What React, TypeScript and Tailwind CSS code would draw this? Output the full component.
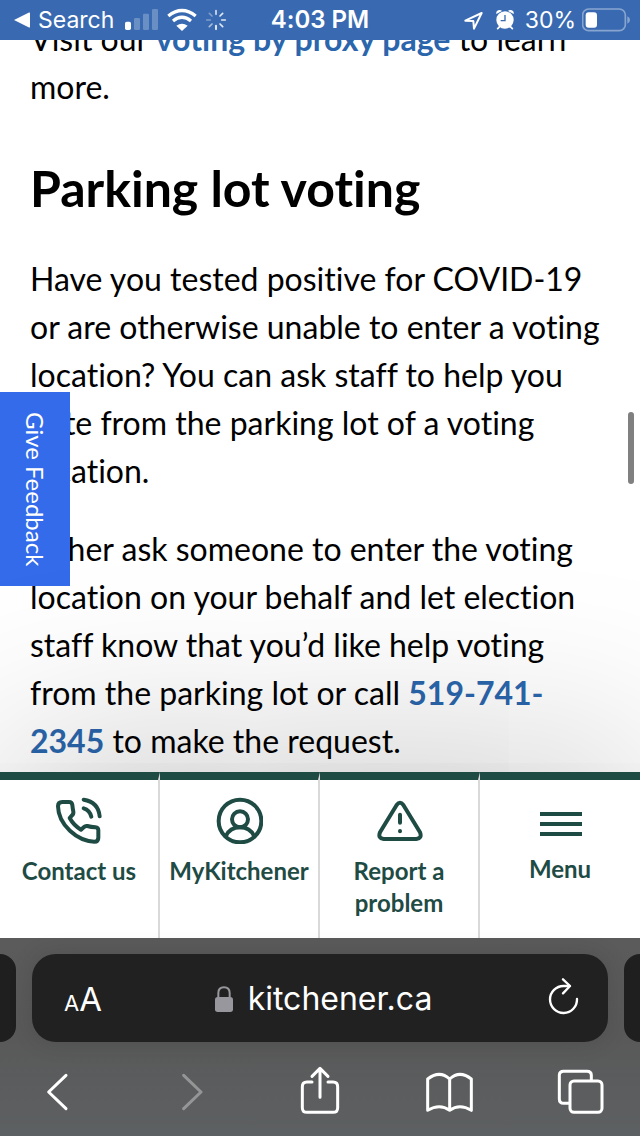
import type { ReactNode } from "react"

function StatusBar() {
  return (
    <header className="relative z-20 grid h-10 grid-cols-[1fr_auto_1fr] items-center bg-[#396ab1] font-['Inter',sans-serif] text-2xl leading-10 text-white">
      <div className="flex items-center pl-3.5">
        <button className="flex items-center gap-2">
          <svg className="h-4 w-4" viewBox="0 0 16 16" fill="currentColor" aria-hidden="true">
            <path d="M0 8 15 .5q1-.4 1 .8v13.4q0 1.200-1 .8z" />
          </svg>
          <span className="text-[23px]">Search</span>
        </button>
        <svg className="ml-2.5 h-6 w-9 shrink-0" viewBox="375 24 108 72" fill="currentColor" role="img" aria-label="Signal">
          <rect x="378" y="65" width="18" height="25" rx="5" />
          <rect x="405" y="54" width="18" height="36" rx="4" opacity=".25" />
          <rect x="432" y="41" width="18" height="49" rx="4" opacity=".25" />
          <rect x="459" y="27" width="18" height="63" rx="4" opacity=".25" />
        </svg>
        <svg className="ml-1.5 h-6 w-8 shrink-0" viewBox="500 24 96 72" fill="none" role="img" aria-label="Wi-Fi">
          <path d="M507 48q41-33 82 0M521 63q27-22 54 0" stroke="currentColor" strokeWidth="10" />
          <path d="M531 77q17-11 34 0l-17 16z" fill="currentColor" />
        </svg>
        <svg className="ml-1.5 h-6 w-6 shrink-0" viewBox="612 24 72 72" stroke="currentColor" strokeWidth="5" strokeLinecap="round" role="img" aria-label="Loading">
          <path d="M648 32v11" opacity=".8" />
          <path d="m668 40-8 8M676 60h-11M668 80l-8-8" opacity=".85" />
          <path d="M648 88V77" />
          <path d="m628 80 8-8" opacity=".55" />
          <path d="M620 60h11M628 40l8 8" opacity=".35" />
        </svg>
      </div>
      <time className="font-semibold">4:03 PM</time>
      <div className="flex items-center justify-end pr-2.5">
        <svg className="h-6 w-6" viewBox="432 24 72 72" fill="none" stroke="currentColor" strokeWidth="6" strokeLinejoin="round" role="img" aria-label="Location">
          <path d="m439 62 49-23-23 47-2-23z" />
        </svg>
        <svg className="ml-1.5 h-6 w-6" viewBox="518 24 72 72" fill="currentColor" role="img" aria-label="Alarm">
          <circle cx="554" cy="60" r="26" />
          <path d="M528 42q-2-11 10-12 5 0 7 3zM580 42q2-11-10-12-5 0-7 3z" />
          <path d="m538 80-6 6M570 80l6 6" stroke="currentColor" strokeWidth="5" strokeLinecap="round" />
          <path d="M554 45v17h-13" fill="none" stroke="#396ab1" strokeWidth="4" />
        </svg>
        <span className="ml-2 text-[23px]">30%</span>
        <svg className="ml-1.5 h-6 w-12 shrink-0" viewBox="783 23 144 72" fill="currentColor" role="img" aria-label="Battery">
          <rect x="785" y="26" width="128" height="65" rx="18" fill="none" stroke="currentColor" strokeWidth="5" opacity=".4" />
          <rect x="794" y="36" width="34" height="46" rx="9" />
          <path d="M919 48q8 4 8 11t-8 11z" opacity=".4" />
        </svg>
      </div>
    </header>
  )
}

function Article() {
  return (
    <article className="-mt-[25px] px-[30px] pb-[7px] text-[32px] leading-[48px] text-black">
      <p>
        Visit our{" "}
        <a href="#proxy" className="font-bold text-[#2b66ad]">
          voting by proxy page
        </a>{" "}
        to learn more.
      </p>
      <h2 className="mt-[43px] mb-[33px] text-[50px] leading-[68px] font-bold">Parking lot voting</h2>
      <p>
        Have you tested positive for COVID-19 or are otherwise unable to enter a voting location? You can ask
        staff to help you vote from the parking lot of a voting location.
      </p>
      <p className="mt-[30px]">
        Either ask someone to enter the voting location on your behalf and let election staff know that you’d
        like help voting from the parking lot or call{" "}
        <a href="tel:519-741-2345" className="font-bold text-[#2b66ad]">
          519-741-2345
        </a>{" "}
        to make the request.
      </p>
    </article>
  )
}

function NavItem({ label, viewBox, children }: { label: string; viewBox: string; children: ReactNode }) {
  return (
    <a
      href="#"
      className="flex flex-col items-center gap-[11px] border-t-8 border-r-2 border-t-[#1f4b45] border-r-[#d9d9d9] pt-4 pb-[19px] text-center text-2xl leading-8 font-bold text-[#1f4b45] last:gap-[9px] last:border-r-0"
    >
      <svg
        className="h-12 w-12"
        viewBox={viewBox}
        fill="none"
        stroke="currentColor"
        strokeWidth="12"
        strokeLinecap="round"
        strokeLinejoin="round"
        aria-hidden="true"
      >
        {children}
      </svg>
      <span>{label}</span>
    </a>
  )
}

function SiteNav() {
  return (
    <nav className="relative z-10 grid grid-cols-4 bg-white shadow-[0_0_200px_rgba(0,0,0,0.28)]">
      <NavItem label="Contact us" viewBox="165 108 144 144">
        <path d="M187 126h20q9 0 10 9 1 10 3 20 1 7-4 11l-7 8q12 22 34 35l9-8q4-4 10-3 11 3 24 4 9 1 9 9v22q0 12-12 12C232 243 175 195 174 139q0-13 13-13z" />
        <path d="M251 119q44 7 48 50M251 145q18 5 23 25" />
      </NavItem>
      <NavItem label="MyKitchener" viewBox="645 108 144 144">
        <circle cx="720" cy="183" r="64" />
        <circle cx="720" cy="178" r="24" />
        <path d="M677 229q13-27 43-27t43 27" />
      </NavItem>
      <NavItem label="Report a problem" viewBox="165 108 144 144">
        <path d="M230 135q10-13 20 0l50 82q7 18-11 20h-98q-18-2-11-20z" />
        <path d="M240 164v24M240 213v1" />
      </NavItem>
      <NavItem label="Menu" viewBox="648 108 144 144">
        <path d="M660 162h126M660 192h126M660 222h126" strokeLinecap="butt" />
      </NavItem>
    </nav>
  )
}

function ToolButton({ label, viewBox, children }: { label: string; viewBox: string; children: ReactNode }) {
  return (
    <button aria-label={label} className="h-12 w-12 disabled:opacity-35" disabled={label === "Forward"}>
      <svg
        className="h-12 w-12"
        viewBox={viewBox}
        fill="none"
        stroke="currentColor"
        strokeWidth="9"
        strokeLinecap="round"
        strokeLinejoin="round"
      >
        {children}
      </svg>
    </button>
  )
}

function BrowserBar() {
  return (
    <footer className="relative z-20 bg-linear-to-b from-[#5b5b5b] via-[#595959] to-[#5d6062] pt-4 font-['Inter',sans-serif] text-white">
      <div className="flex gap-4">
        <div className="w-4 rounded-r-3xl bg-[#1f1f1f]" />
        <div className="flex h-[88px] flex-1 items-center justify-between rounded-3xl bg-[#212121] pr-7 pl-8 shadow-[0_0_24px_rgba(0,0,0,0.12)]">
          <button aria-label="Page settings" className="flex items-baseline pt-1">
            <span className="text-[22px]">A</span>
            <span className="text-[33px]">A</span>
          </button>
          <button className="flex items-center gap-3.5 pt-0.5 pr-1 text-[32px]">
            <svg className="h-7 w-5" viewBox="641 162 60 84" role="img" aria-label="Secure">
              <rect x="644" y="198" width="54" height="45" rx="8" fill="#98979d" />
              <path d="M654 200v-14q0-17 17-17t17 17v14" fill="none" stroke="#98979d" strokeWidth="6" />
            </svg>
            kitchener.ca
          </button>
          <button aria-label="Reload">
            <svg className="h-10 w-8" viewBox="684 144 96 120" fill="none" stroke="currentColor" strokeWidth="7" strokeLinecap="round" strokeLinejoin="round">
              <path d="M771 207a40.500 40.500 0 1 1-40-39h18" />
              <path d="m729 148 21 20-21 22" />
            </svg>
          </button>
        </div>
        <div className="w-4 rounded-l-3xl bg-[#1f1f1f]" />
      </div>
      <div className="flex justify-between pt-6 pr-9 pb-[22px] pl-8">
        <ToolButton label="Back" viewBox="96 408 144 144">
          <path d="m198 436-52 50 52 50" />
        </ToolButton>
        <ToolButton label="Forward" viewBox="489 408 144 144">
          <path d="m551 436 52 50-52 50" />
        </ToolButton>
        <ToolButton label="Share" viewBox="882 408 144 144">
          <path d="M936 456h-15q-14 0-14 14v63q0 14 14 14h78q14 0 14-14v-63q0-14-14-14h-15M960 502v-84M936 439l24-24 24 24" />
        </ToolButton>
        <ToolButton label="Bookmarks" viewBox="315 408 144 144">
          <path d="M389 447q-30-28-66 0v94q36-22 66 0 30-22 65 0v-94q-35-28-65 0zv94" />
        </ToolButton>
        <ToolButton label="Tabs" viewBox="708 408 144 144">
          <path d="M748 520h-17q-13 0-13-13v-71q0-12 13-12h70q13 0 13 12v15" />
          <rect x="750" y="453" width="96" height="94" rx="12" />
        </ToolButton>
      </div>
    </footer>
  )
}

export default function App() {
  return (
    <div className="relative flex min-h-screen flex-col bg-white font-['Lato',sans-serif] [font-variant-ligatures:none]">
      <StatusBar />
      <main className="flex-1">
        <Article />
      </main>
      <SiteNav />
      <BrowserBar />
      <button className="absolute top-[392px] left-0 flex h-[194px] w-[70px] items-center justify-center bg-[#336bea] text-2xl text-white [writing-mode:vertical-rl]">
        Give Feedback
      </button>
      <div className="absolute top-[412px] right-1.5 h-[72px] w-1.5 rounded-full bg-[#808080]" />
    </div>
  )
}
